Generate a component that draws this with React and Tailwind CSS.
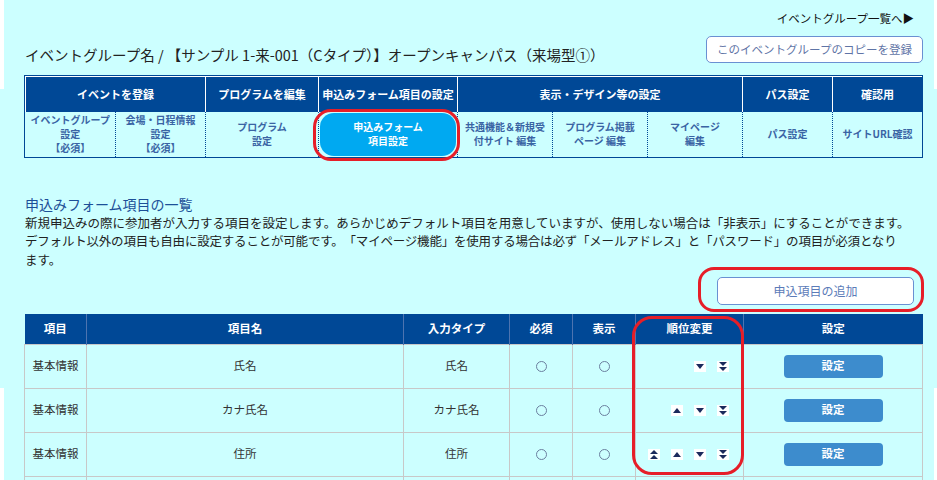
import React from "react";

const NAVY = "#1b2a5c";

function Arrow({ type }) {
  const shapes = {
    up: ["2,8 10,8 6,3"],
    down: ["2,3 10,3 6,8"],
    top: ["2,5 10,5 6,1", "2,10 10,10 6,6"],
    bottom: ["2,1 10,1 6,5", "2,6 10,6 6,10"],
  };
  return (
    <span className="flex w-[12px] h-[11px] bg-white">
      <svg width="12" height="11" viewBox="0 0 12 11">
        {shapes[type].map((p, i) => (
          <polygon key={i} points={p} fill={NAVY} />
        ))}
      </svg>
    </span>
  );
}

function Circle() {
  return <span className="inline-block w-[11px] h-[11px] rounded-full border border-[#6b7f9f]" />;
}

const rows = [
  { cat: "基本情報", name: "氏名", type: "氏名", arrows: ["down", "bottom"] },
  { cat: "基本情報", name: "カナ氏名", type: "カナ氏名", arrows: ["up", "down", "bottom"] },
  { cat: "基本情報", name: "住所", type: "住所", arrows: ["top", "up", "down", "bottom"] },
];

export default function App() {
  return (
    <div className="relative h-[480px] bg-[#ccffff] text-[#222] font-['Noto_Sans_CJK_JP','Noto_Sans',sans-serif] overflow-hidden">
      {/* edge strips from the capture */}
      <div className="absolute left-0 top-0 w-[4px] h-[89px] bg-white" />
      <div className="absolute left-0 top-[388px] w-[4px] h-[100px] bg-white" />
      <div className="absolute right-0 top-0 w-[3px] h-[89px] bg-white" />
      <div className="absolute right-0 top-[388px] w-[3px] h-[100px] bg-white" />

      <div className="px-[24px] pt-[10px] w-[947px]">
        {/* top link */}
        <div className="flex justify-end w-[899px] pr-[9px] h-[16px] text-[11.5px] leading-[16px] text-[#111]">
          イベントグループ一覧へ▶
        </div>

        {/* title + copy button */}
        <div className="flex items-end justify-between mt-[10px] w-[899px]">
          <h1 className="pl-[1px] text-[14.5px] leading-[20px] text-[#222] mb-[-2px]">
            イベントグループ名 / 【サンプル 1-来-001（Cタイプ）】オープンキャンパス（来場型①）
          </h1>
          <button className="w-[217px] h-[27px] bg-white border border-[#6a90d2] rounded-[5px] text-[11.5px] text-[#5f74a6]">
            このイベントグループのコピーを登録
          </button>
        </div>

        {/* navigation table */}
        <div className="mt-[12px] w-[899px] border border-[#004896]">
          <table className="w-full table-fixed border-collapse">
            <colgroup>
              <col className="w-[90px]" />
              <col className="w-[90px]" />
              <col className="w-[113px]" />
              <col className="w-[139px]" />
              <col className="w-[95px]" />
              <col className="w-[95px]" />
              <col className="w-[95px]" />
              <col className="w-[90px]" />
              <col />
            </colgroup>
            <thead>
              <tr className="h-[35px] bg-[#004896] text-white text-[11px] font-bold">
                <th colSpan={2} className="border-t border-l border-white">イベントを登録</th>
                <th className="border-t border-l border-white">プログラムを編集</th>
                <th className="border-t border-l border-white">申込みフォーム項目の設定</th>
                <th colSpan={3} className="border-t border-l border-white">表示・デザイン等の設定</th>
                <th className="border-t border-l border-white">パス設定</th>
                <th className="border-t border-l border-white">確認用</th>
              </tr>
            </thead>
            <tbody>
              <tr className="h-[45px] text-[10px] leading-[14px] font-bold text-[#3a64a4] text-center">
                <td className="border-r border-dotted border-[#004896]">イベントグループ<br />設定<br />【必須】</td>
                <td className="border-r border-dotted border-[#004896]">会場・日程情報<br />設定<br />【必須】</td>
                <td className="border-r border-dotted border-[#004896]">プログラム<br />設定</td>
                <td className="p-[1px] border-r border-dotted border-[#004896]">
                  <div className="h-[43px] flex items-center justify-center rounded-[14px] bg-[#00a9f1] text-white">
                    申込みフォーム<br />項目設定
                  </div>
                </td>
                <td className="border-r border-dotted border-[#004896]">共通機能＆新規受<br />付サイト 編集</td>
                <td className="border-r border-dotted border-[#004896]">プログラム掲載<br />ページ 編集</td>
                <td className="border-r border-dotted border-[#004896]">マイページ<br />編集</td>
                <td className="border-r border-dotted border-[#004896]">パス設定</td>
                <td>サイトURL確認</td>
              </tr>
            </tbody>
          </table>
        </div>

        {/* section */}
        <h2 className="mt-[36px] pl-[1px] text-[14px] leading-[20px] text-[#1c4f98]">申込みフォーム項目の一覧</h2>
        <p className="pl-[1px] text-[12.5px] leading-[18.5px] text-[#222] whitespace-nowrap [text-spacing-trim:space-all]">
          新規申込みの際に参加者が入力する項目を設定します。あらかじめデフォルト項目を用意していますが、使用しない場合は「非表示」にすることができます。
          <br />
          <span className="tracking-[-0.2px]">
            デフォルト以外の項目も自由に設定することが可能です。「マイページ機能」を使用する場合は必ず「メールアドレス」と「パスワード」の項目が必須となり
          </span>
          <br />
          ます。
        </p>

        <div className="flex justify-end w-[899px] pr-[9px] mt-[8px]">
          <button className="w-[197px] h-[28px] bg-white border border-[#6a90d2] rounded-[5px] text-[12px] text-[#5b7bb8]">
            申込項目の追加
          </button>
        </div>

        {/* items table */}
        <table className="mt-[9px] w-[899px] table-fixed border-collapse text-[11.5px]">
          <colgroup>
            <col className="w-[62px]" />
            <col className="w-[317px]" />
            <col className="w-[106px]" />
            <col className="w-[63px]" />
            <col className="w-[63px]" />
            <col className="w-[108px]" />
            <col />
          </colgroup>
          <thead>
            <tr className="h-[30px] bg-[#004896] text-white font-bold">
              <th className="border-r border-[#4d74b0]">項目</th>
              <th className="border-r border-[#4d74b0]">項目名</th>
              <th className="border-r border-[#4d74b0]">入力タイプ</th>
              <th className="border-r border-[#4d74b0]">必須</th>
              <th className="border-r border-[#4d74b0]">表示</th>
              <th className="border-r border-[#4d74b0]">順位変更</th>
              <th>設定</th>
            </tr>
          </thead>
          <tbody className="text-[#333]">
            {rows.map((r, i) => (
              <tr key={i} className="h-[44px] text-center">
                <td className="border border-[#c8c8c8]">{r.cat}</td>
                <td className="border border-[#c8c8c8]">{r.name}</td>
                <td className="border border-[#c8c8c8]">{r.type}</td>
                <td className="border border-[#c8c8c8]"><div className="flex justify-center"><Circle /></div></td>
                <td className="border border-[#c8c8c8]"><div className="flex justify-center"><Circle /></div></td>
                <td className="border border-[#c8c8c8]">
                  <div className="flex justify-end gap-[11px] pr-[14px]">
                    {r.arrows.map((a) => (
                      <Arrow key={a} type={a} />
                    ))}
                  </div>
                </td>
                <td className="border border-[#c8c8c8]">
                  <div className="flex justify-center">
                    <button className="w-[99px] h-[23px] rounded-[4px] bg-[#3d8ccd] text-white font-bold text-[11.5px]">設定</button>
                  </div>
                </td>
              </tr>
            ))}
            <tr className="h-[44px]">
              <td className="border border-[#c8c8c8]" />
              <td className="border border-[#c8c8c8]" />
              <td className="border border-[#c8c8c8]" />
              <td className="border border-[#c8c8c8]" />
              <td className="border border-[#c8c8c8]" />
              <td className="border border-[#c8c8c8]" />
              <td className="border border-[#c8c8c8]" />
            </tr>
          </tbody>
        </table>
      </div>

      {/* red annotation outlines */}
      <div className="absolute left-[313px] top-[109px] w-[147px] h-[52px] rounded-[18px] border-[3px] border-[#e61e28]" />
      <div className="absolute left-[698px] top-[267px] w-[226px] h-[45px] rounded-[16px] border-[3px] border-[#e61e28]" />
      <div className="absolute left-[632px] top-[316px] w-[112px] h-[159px] rounded-[20px] border-[3px] border-[#e61e28]" />
    </div>
  );
}
